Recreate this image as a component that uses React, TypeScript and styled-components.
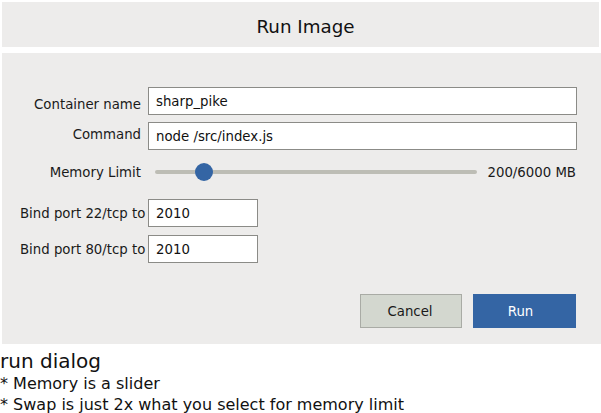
import React from "react";
import styled, { createGlobalStyle } from "styled-components";

const Global = createGlobalStyle`
  html, body { margin: 0; padding: 0; background: #ffffff; }
  body { font-family: "DejaVu Sans", "Liberation Sans", sans-serif; color: #1a1a1a; overflow: hidden; }
`;

const Page = styled.div`
  padding: 2px 0 0 2px;
  width: 599px;
`;

const Header = styled.div`
  height: 45px;
  margin-right: 2px;
  background: #edeceb;
  display: flex;
  align-items: center;
  justify-content: center;
  font-size: 18.3px;
  color: #111;
  padding: 4px 0 0 10px;
  box-sizing: border-box;
`;

const Panel = styled.div`
  margin-top: 6px;
  height: 291px;
  box-sizing: border-box;
  background: #edeceb;
  padding: 34px 24px 0 0;
  display: flex;
  flex-direction: column;
`;

const Grid = styled.div`
  display: grid;
  grid-template-columns: 139px 1fr;
  column-gap: 7px;
  row-gap: 7px;
  align-items: center;
`;

const Label = styled.div<{ $shift?: number }>`
  font-size: 13.3px;
  text-align: right;
  color: #1a1a1a;
  white-space: nowrap;
  transform: translateY(${(p) => p.$shift ?? 0}px);
`;

const Input = styled.div<{ $width?: number }>`
  height: 28px;
  box-sizing: border-box;
  background: #ffffff;
  border: 1px solid #8b8b87;
  font-size: 13.3px;
  display: flex;
  align-items: center;
  padding-left: 7px;
  color: #111;
  width: ${(p) => (p.$width ? `${p.$width}px` : "auto")};
`;

const SliderRow = styled.div`
  height: 30px;
  display: flex;
  align-items: center;
  gap: 10px;
  padding-left: 7px;
`;

const Track = styled.div`
  position: relative;
  flex: 1;
  height: 4px;
  background: #bdbdb5;
  border-radius: 2px;
`;

const Thumb = styled.div`
  position: absolute;
  top: 50%;
  width: 18px;
  height: 18px;
  margin-top: -9px;
  border-radius: 50%;
  background: #3465a4;
`;

const SliderValue = styled.div`
  font-size: 13.3px;
  color: #1a1a1a;
  margin-right: 1px;
  white-space: nowrap;
`;

const BindRows = styled.div`
  margin-top: 12px;
  display: flex;
  flex-direction: column;
  gap: 8px;
  padding-left: 18px;
`;

const BindRow = styled.div`
  display: flex;
  align-items: center;
  gap: 3px;
`;

const BindLabel = styled.div`
  font-size: 13.3px;
  color: #1a1a1a;
  width: 125px;
  white-space: nowrap;
`;

const Buttons = styled.div`
  margin-top: 31px;
  display: flex;
  justify-content: flex-end;
  gap: 11px;
  padding-right: 1px;
`;

const Button = styled.div<{ $primary?: boolean }>`
  width: ${(p) => (p.$primary ? 103 : 102)}px;
  height: 34px;
  box-sizing: border-box;
  display: flex;
  align-items: center;
  justify-content: center;
  font-size: 13.3px;
  padding-right: ${(p) => (p.$primary ? 8 : 2)}px;
  background: ${(p) => (p.$primary ? "#3465a4" : "#d3d7cf")};
  border: 1px solid ${(p) => (p.$primary ? "#3465a4" : "#a9aba5")};
  color: ${(p) => (p.$primary ? "#ffffff" : "#1a1a1a")};
`;

const Notes = styled.div`
  margin-top: 6px;
  margin-left: -2px;
  color: #111;
`;

const NoteTitle = styled.div`
  font-size: 20px;
  line-height: 23px;
`;

const NoteLine = styled.div`
  font-size: 16px;
  line-height: 21px;
`;

export default function App() {
  const thumbFrac = 0.124;
  return (
    <>
      <Global />
      <Page>
        <Header>Run Image</Header>
        <Panel>
          <Grid>
            <Label $shift={3}>Container name</Label>
            <Input>sharp_pike</Input>
            <Label $shift={-2}>Command</Label>
            <Input>node /src/index.js</Input>
            <Label>Memory Limit</Label>
            <SliderRow>
              <Track>
                <Thumb style={{ left: `${thumbFrac * 100}%` }} />
              </Track>
              <SliderValue>200/6000 MB</SliderValue>
            </SliderRow>
          </Grid>
          <BindRows>
            <BindRow>
              <BindLabel>Bind port 22/tcp to</BindLabel>
              <Input $width={110}>2010</Input>
            </BindRow>
            <BindRow>
              <BindLabel>Bind port 80/tcp to</BindLabel>
              <Input $width={110}>2010</Input>
            </BindRow>
          </BindRows>
          <Buttons>
            <Button>Cancel</Button>
            <Button $primary>Run</Button>
          </Buttons>
        </Panel>
        <Notes>
          <NoteTitle>run dialog</NoteTitle>
          <NoteLine>* Memory is a slider</NoteLine>
          <NoteLine>* Swap is just 2x what you select for memory limit</NoteLine>
        </Notes>
      </Page>
    </>
  );
}
